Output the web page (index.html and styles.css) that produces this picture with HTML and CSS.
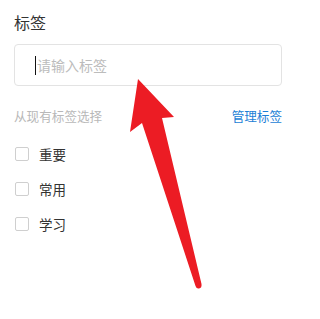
FILE: index.html
```html
<!DOCTYPE html>
<html lang="zh-CN">
<head>
<meta charset="utf-8">
<title>标签</title>
<link rel="stylesheet" href="styles.css">
</head>
<body>
<div class="panel">
  <div class="title">标签</div>
  <div class="input">
    <span class="caret"></span>
    <span class="placeholder">请输入标签</span>
  </div>
  <div class="row-head">
    <span class="hint">从现有标签选择</span>
    <a class="manage">管理标签</a>
  </div>
  <ul class="list">
    <li class="item"><span class="box"></span><span class="label">重要</span></li>
    <li class="item"><span class="box"></span><span class="label">常用</span></li>
    <li class="item"><span class="box"></span><span class="label">学习</span></li>
  </ul>
</div>
<svg class="arrow" width="311" height="319" viewBox="0 0 311 319" xmlns="http://www.w3.org/2000/svg">
  <path d="M138 79 L174 117 L162 118 L201.5 284 Q202 288 199 288.5 Q196.5 289 195.5 286 L142 123 L130 132 Z" fill="#ec1c24"/>
</svg>
</body>
</html>
```
FILE: styles.css
```css
html, body {
  margin: 0;
  padding: 0;
  background: #ffffff;
}
body {
  width: 311px;
  height: 319px;
  overflow: hidden;
  position: relative;
  font-family: "Noto Sans CJK SC", "Noto Sans", sans-serif;
}
.panel {
  padding: 11px 29px 0 14px;
}
.title {
  font-size: 16px;
  line-height: 22px;
  color: #333333;
}
.input {
  margin-top: 11px;
  height: 42px;
  box-sizing: border-box;
  border: 1px solid #e3e3e3;
  border-radius: 4px;
  display: flex;
  align-items: center;
  padding-left: 20px;
}
.caret {
  width: 1px;
  height: 19px;
  background: #111111;
  margin-right: 1px;
}
.placeholder {
  font-size: 14px;
  line-height: 20px;
  color: #bcbcbc;
}
.row-head {
  margin-top: 20px;
  display: flex;
  justify-content: space-between;
  align-items: center;
  line-height: 20px;
}
.hint {
  font-size: 12.6px;
  color: #b8b8b8;
}
.manage {
  font-size: 12.6px;
  color: #1a7ed6;
  text-decoration: none;
}
.list {
  list-style: none;
  margin: 10px 0 0 0;
  padding: 0;
}
.item {
  height: 35px;
  display: flex;
  align-items: center;
}
.box {
  width: 14px;
  height: 14px;
  box-sizing: border-box;
  border: 1px solid #cfcfcf;
  border-radius: 2px;
  margin-left: 1px;
  margin-right: 10px;
}
.label {
  font-size: 13.5px;
  color: #333333;
  line-height: 20px;
}
.arrow {
  position: absolute;
  left: 0;
  top: 0;
  pointer-events: none;
}
```
